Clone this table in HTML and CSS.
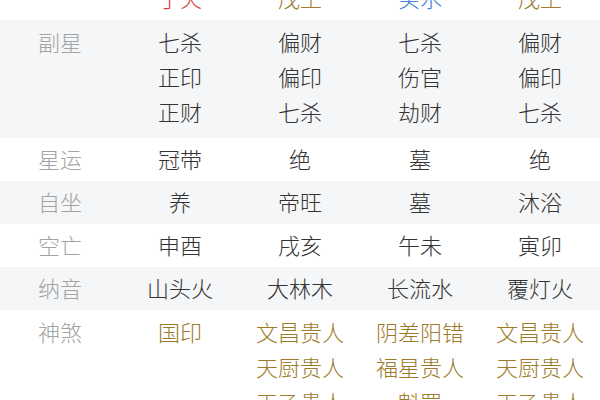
FILE: index.html
```html
<!DOCTYPE html>
<html lang="zh-CN">
<head>
<meta charset="utf-8">
<title>八字排盘</title>
<link rel="stylesheet" href="styles.css">
</head>
<body>
<div class="table">
  <div class="row">
    <div class="label"></div>
    <div class="cell red">丁火</div>
    <div class="cell gold">戊土</div>
    <div class="cell blue">癸水</div>
    <div class="cell gold">戊土</div>
  </div>
  <div class="row alt multi">
    <div class="label">副星</div>
    <div class="cell"><span>七杀</span><span>正印</span><span>正财</span></div>
    <div class="cell"><span>偏财</span><span>偏印</span><span>七杀</span></div>
    <div class="cell"><span>七杀</span><span>伤官</span><span>劫财</span></div>
    <div class="cell"><span>偏财</span><span>偏印</span><span>七杀</span></div>
  </div>
  <div class="row">
    <div class="label">星运</div>
    <div class="cell">冠带</div>
    <div class="cell">绝</div>
    <div class="cell">墓</div>
    <div class="cell">绝</div>
  </div>
  <div class="row alt">
    <div class="label">自坐</div>
    <div class="cell">养</div>
    <div class="cell">帝旺</div>
    <div class="cell">墓</div>
    <div class="cell">沐浴</div>
  </div>
  <div class="row">
    <div class="label">空亡</div>
    <div class="cell">申酉</div>
    <div class="cell">戌亥</div>
    <div class="cell">午未</div>
    <div class="cell">寅卯</div>
  </div>
  <div class="row alt">
    <div class="label">纳音</div>
    <div class="cell">山头火</div>
    <div class="cell">大林木</div>
    <div class="cell">长流水</div>
    <div class="cell">覆灯火</div>
  </div>
  <div class="row multi">
    <div class="label">神煞</div>
    <div class="cell gold"><span>国印</span></div>
    <div class="cell gold"><span>文昌贵人</span><span>天厨贵人</span><span>天乙贵人</span></div>
    <div class="cell gold"><span>阴差阳错</span><span>福星贵人</span><span>魁罡</span></div>
    <div class="cell gold"><span>文昌贵人</span><span>天厨贵人</span><span>天乙贵人</span></div>
  </div>
</div>
</body>
</html>
```
FILE: styles.css
```css
html, body {
  margin: 0;
  padding: 0;
  background: #ffffff;
  overflow: hidden;
}
body {
  font-family: "Noto Sans CJK SC", "Noto Sans", sans-serif;
  font-size: 22px;
  font-weight: 300;
  color: #333333;
}
.table {
  width: 600px;
  margin-top: -23px;
}
.row {
  display: grid;
  grid-template-columns: repeat(5, 120px);
  padding: 1.5px 0 5.5px;
  line-height: 36px;
  background: #ffffff;
}
.row.alt {
  background: #f5f6f7;
}
.row.multi {
  padding: 4px 0 9px;
  line-height: 35px;
}
.label {
  color: #a3a3a3;
  text-align: center;
}
.cell {
  text-align: center;
  display: flex;
  flex-direction: column;
  align-items: center;
}
.red { color: #d23a2e; }
.blue { color: #3f7fd8; }
.gold { color: #9c7a28; }
```
